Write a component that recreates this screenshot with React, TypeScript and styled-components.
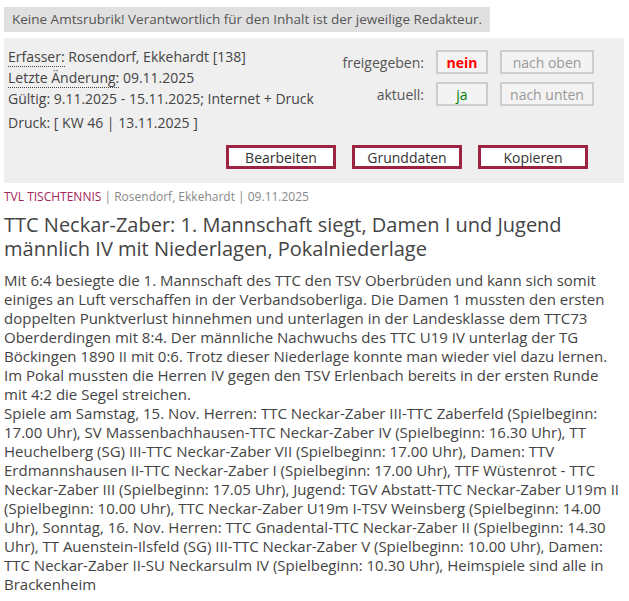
import React from "react";
import styled, { createGlobalStyle } from "styled-components";

const Global = createGlobalStyle`
  html, body { margin: 0; padding: 0; background: #fff; }
  body {
    font-family: "Open Sans", "Noto Sans", sans-serif;
    color: #444;
    font-size: 14px;
  }
`;

const Page = styled.div`
  padding: 7px 5px 10px 4px;
`;

const Notice = styled.div`
  display: inline-block;
  background: #e0e0e0;
  color: #555;
  font-size: 13.5px;
  line-height: 25px;
  padding: 0 8px 0 8px;
`;

const Panel = styled.div`
  margin-top: 6px;
  background: #efefef;
  padding: 8px 0 14px 4px;
  display: flex;
  flex-direction: column;
`;

const TopArea = styled.div`
  display: flex;
  justify-content: space-between;
  align-items: flex-start;
`;

const Meta = styled.div`
  display: flex;
  flex-direction: column;
  line-height: 21px;
`;

const MetaLine = styled.div<{ $gap?: number }>`
  margin-top: ${(p) => p.$gap ?? 0}px;
`;

const Abbr = styled.abbr`
  text-decoration: none;
  border-bottom: 1px dotted #444;
  cursor: help;
`;

const StatusGrid = styled.div`
  display: grid;
  grid-template-columns: auto 52px 94px;
  column-gap: 12px;
  row-gap: 8px;
  margin: 4px 30px 0 0;
  align-items: center;
`;

const StatusLabel = styled.span`
  text-align: right;
  color: #555;
`;

const StatusBox = styled.span<{ $tone?: "no" | "yes" | "muted" }>`
  box-sizing: border-box;
  height: 24px;
  border: 2px solid #cccccc;
  background: #f3f3f3;
  display: flex;
  align-items: center;
  justify-content: center;
  font-weight: ${(p) => (p.$tone === "no" ? 700 : 400)};
  color: ${(p) =>
    p.$tone === "no" ? "#ff0000" : p.$tone === "yes" ? "#008000" : "#999"};
`;

const Actions = styled.div`
  display: flex;
  justify-content: flex-end;
  gap: 16px;
  margin-top: 12px;
  padding-right: 36px;
`;

const ActionButton = styled.button`
  box-sizing: border-box;
  width: 110px;
  height: 24px;
  border: 3px solid #9c2440;
  background: #fff;
  color: #333;
  font-family: "Open Sans", "Noto Sans", sans-serif;
  font-size: 14px;
  padding: 0;
  cursor: pointer;
`;

const Byline = styled.div`
  margin-top: 5px;
  font-size: 12px;
  line-height: 18px;
  color: #888;
`;

const Category = styled.span`
  color: #a3245a;
`;

const Title = styled.h1`
  margin: 7px 0 0;
  font-weight: 400;
  font-size: 20px;
  line-height: 24px;
  color: #444;
`;

const Body = styled.p`
  margin: 10px 0 0;
  font-size: 15px;
  line-height: 19px;
  color: #444;
`;

export default function App() {
  return (
    <>
      <Global />
      <Page>
        <Notice>
          Keine Amtsrubrik! Verantwortlich für den Inhalt ist der jeweilige
          Redakteur.
        </Notice>
        <Panel>
          <TopArea>
            <Meta>
              <MetaLine>
                <Abbr title="Erfasser">Erfasser:</Abbr> Rosendorf, Ekkehardt
                [138]
              </MetaLine>
              <MetaLine>
                <Abbr title="Letzte Änderung">Letzte Änderung:</Abbr>{" "}
                09.11.2025
              </MetaLine>
              <MetaLine>
                Gültig: 9.11.2025 - 15.11.2025; Internet + Druck
              </MetaLine>
              <MetaLine $gap={3}>Druck: [ KW 46 | 13.11.2025 ]</MetaLine>
            </Meta>
            <StatusGrid>
              <StatusLabel>freigegeben:</StatusLabel>
              <StatusBox $tone="no">nein</StatusBox>
              <StatusBox $tone="muted">nach oben</StatusBox>
              <StatusLabel>aktuell:</StatusLabel>
              <StatusBox $tone="yes">ja</StatusBox>
              <StatusBox $tone="muted">nach unten</StatusBox>
            </StatusGrid>
          </TopArea>
          <Actions>
            <ActionButton>Bearbeiten</ActionButton>
            <ActionButton>Grunddaten</ActionButton>
            <ActionButton>Kopieren</ActionButton>
          </Actions>
        </Panel>
        <Byline>
          <Category>TVL TISCHTENNIS</Category> | Rosendorf, Ekkehardt |
          09.11.2025
        </Byline>
        <Title>
          TTC Neckar-Zaber: 1. Mannschaft siegt, Damen I und Jugend männlich IV
          mit Niederlagen, Pokalniederlage
        </Title>
        <Body>
          Mit 6:4 besiegte die 1. Mannschaft des TTC den TSV Oberbrüden und kann
          sich somit einiges an Luft verschaffen in der Verbandsoberliga. Die
          Damen 1 mussten den ersten doppelten Punktverlust hinnehmen und
          unterlagen in der Landesklasse dem TTC73 Oberderdingen mit 8:4. Der
          männliche Nachwuchs des TTC U19 IV unterlag der TG Böckingen 1890 II
          mit 0:6. Trotz dieser Niederlage konnte man wieder viel dazu lernen.
          Im Pokal mussten die Herren IV gegen den TSV Erlenbach bereits in der
          ersten Runde mit 4:2 die Segel streichen.
          <br />
          Spiele am Samstag, 15. Nov. Herren: TTC Neckar-Zaber III-TTC
          Zaberfeld (Spielbeginn: 17.00 Uhr), SV Massenbachhausen-TTC
          Neckar-Zaber IV (Spielbeginn: 16.30 Uhr), TT Heuchelberg (SG)
          III-TTC Neckar-Zaber VII (Spielbeginn: 17.00 Uhr), Damen: TTV
          Erdmannshausen II-TTC Neckar-Zaber I (Spielbeginn: 17.00 Uhr), TTF
          Wüstenrot - TTC Neckar-Zaber III (Spielbeginn: 17.05 Uhr), Jugend:
          TGV Abstatt-TTC Neckar-Zaber U19m II (Spielbeginn: 10.00 Uhr), TTC
          Neckar-Zaber U19m I-TSV Weinsberg (Spielbeginn: 14.00 Uhr), Sonntag,
          16. Nov. Herren: TTC Gnadental-TTC Neckar-Zaber II (Spielbeginn:
          14.30 Uhr), TT Auenstein-Ilsfeld (SG) III-TTC Neckar-Zaber V
          (Spielbeginn: 10.00 Uhr), Damen: TTC Neckar-Zaber II-SU Neckarsulm IV
          (Spielbeginn: 10.30 Uhr), Heimspiele sind alle in Brackenheim
        </Body>
      </Page>
    </>
  );
}
